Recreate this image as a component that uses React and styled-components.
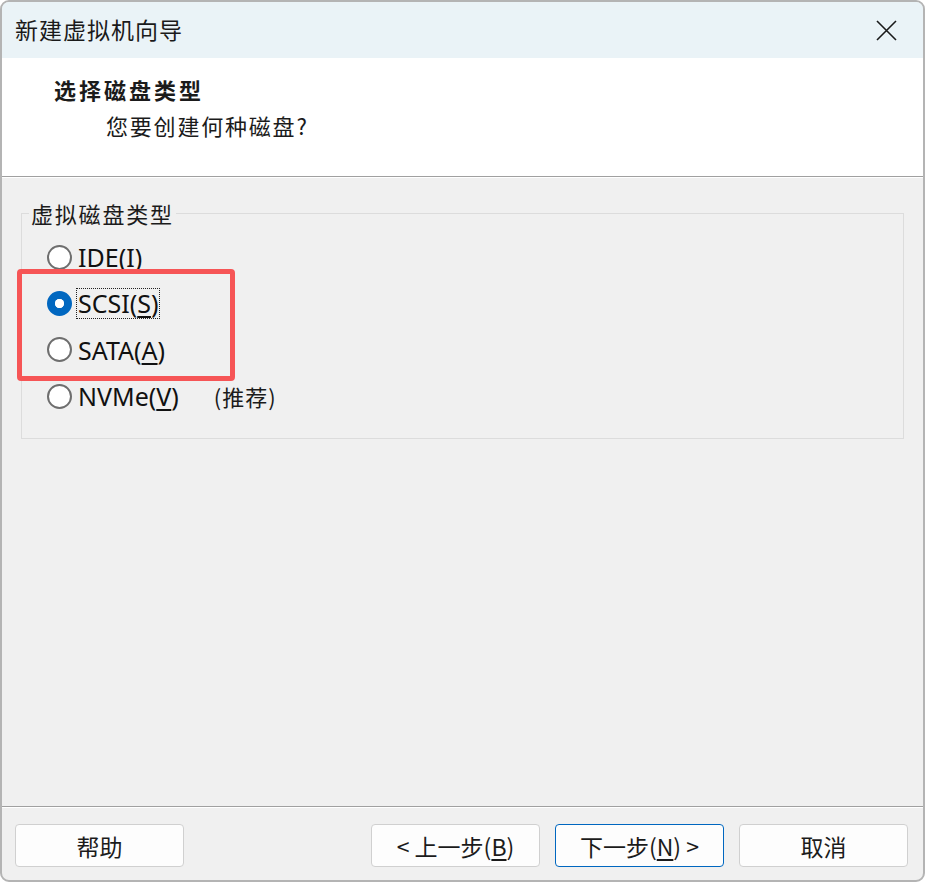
import React, { useState } from "react";
import styled, { createGlobalStyle } from "styled-components";

const GlobalStyle = createGlobalStyle`
  html, body {
    margin: 0;
    padding: 0;
    background: #ffffff;
  }
  body {
    font-family: "Noto Sans", "Noto Sans CJK SC", sans-serif;
    color: #1b1b1b;
  }
`;

const cjk = `"Noto Sans CJK SC", "Noto Sans", sans-serif`;
const latin = `"Noto Sans", "Noto Sans CJK SC", sans-serif`;

const Window = styled.div`
  box-sizing: border-box;
  width: 925px;
  height: 882px;
  border: 2px solid #b4b4b4;
  border-radius: 9px;
  overflow: hidden;
  display: flex;
  flex-direction: column;
  background: #f0f0f0;
`;

const TitleBar = styled.div`
  height: 56px;
  flex: none;
  display: flex;
  align-items: center;
  justify-content: space-between;
  padding: 0 0 0 13px;
  background: #eaf3f7;
  font-family: ${cjk};
  font-size: 23px;
  letter-spacing: 1px;
  color: #1a1a1a;
`;

const TitleText = styled.span`
  margin-top: -2px;
`;

const CloseButton = styled.button`
  width: 66px;
  height: 56px;
  border: 0;
  background: transparent;
  display: flex;
  align-items: center;
  justify-content: center;
  padding: 0 8px 0 0;
  color: #1a1a1a;
`;

const Header = styled.div`
  height: 119px;
  flex: none;
  box-sizing: border-box;
  background: #ffffff;
  border-bottom: 1px solid #a0a0a0;
  box-shadow: 0 1px 0 #ffffff;
  padding: 15px 0 0 52px;
  font-family: ${cjk};
`;

const StepTitle = styled.div`
  font-size: 22px;
  font-weight: 700;
  line-height: 32px;
  letter-spacing: 3px;
`;

const StepSub = styled.div`
  font-size: 22px;
  line-height: 32px;
  padding-left: 52px;
  margin-top: 4px;
  letter-spacing: 1.8px;
`;

const Body = styled.div`
  flex: 1;
  padding: 23px 19px 0 19px;
`;

const Group = styled.fieldset`
  margin: 0;
  padding: 8px 0 19px 0;
  border: 1px solid #dcdcdc;
  min-inline-size: 0;
`;

const Legend = styled.legend`
  margin-left: 7px;
  padding: 0 2px;
  font-family: ${cjk};
  font-size: 22px;
  line-height: 26px;
  letter-spacing: 1.8px;
  color: #1b1b1b;
`;

const RadioList = styled.div`
  position: relative;
  display: grid;
  grid-auto-rows: 46.3px;
  padding-left: 25px;
`;

const Row = styled.label`
  display: flex;
  align-items: center;
  cursor: default;
`;

const Circle = styled.span`
  box-sizing: border-box;
  width: 25px;
  height: 25px;
  border-radius: 50%;
  flex: none;
  display: flex;
  align-items: center;
  justify-content: center;
  border: ${(p) => (p.$checked ? "8px solid #0067c0" : "2px solid #6e6e6e")};
  background: #ffffff;
`;

const Label = styled.span`
  margin-left: 5px;
  padding: 0 1px;
  height: 29px;
  display: flex;
  align-items: center;
  font-family: ${latin};
  font-size: 25px;
  color: #111;
  outline: ${(p) => (p.$focused ? "1px dotted #222" : "none")};
  outline-offset: 0;

  u {
    text-underline-offset: 3px;
    text-decoration-thickness: 1.5px;
  }
`;

const Recommend = styled.span`
  margin-left: 34px;
  font-family: ${cjk};
  font-size: 22px;
  letter-spacing: 1px;
  color: #1b1b1b;
`;

const Highlight = styled.div`
  position: absolute;
  left: -5px;
  top: 35px;
  width: 218px;
  height: 112px;
  box-sizing: border-box;
  border: 5px solid #f65556;
  border-radius: 4px;
  pointer-events: none;
`;

const Footer = styled.div`
  flex: none;
  height: 74px;
  box-sizing: border-box;
  border-top: 1px solid #a0a0a0;
  box-shadow: inset 0 1px 0 #ffffff;
  display: flex;
  align-items: flex-start;
  gap: 15px;
  padding: 17px 15px 0 13px;
`;

const Spacer = styled.div`
  flex: 1;
`;

const Button = styled.button`
  box-sizing: border-box;
  width: 169px;
  height: 43px;
  border-radius: 4px;
  border: 1px solid ${(p) => (p.$primary ? "#0067c0" : "#d0d0d0")};
  background: #fdfdfd;
  font-family: ${cjk};
  font-size: 23px;
  color: #1b1b1b;
  display: flex;
  align-items: center;
  justify-content: center;
  padding: 0;

  u {
    text-underline-offset: 3px;
  }
`;

const Dot = styled.span`
  width: 9px;
  height: 9px;
  border-radius: 50%;
  background: #ffffff;
`;

const options = [
  { id: "ide", text: "IDE(", key: "I" },
  { id: "scsi", text: "SCSI(", key: "S" },
  { id: "sata", text: "SATA(", key: "A" },
  { id: "nvme", text: "NVMe(", key: "V", note: "(推荐)" },
];

export default function App() {
  const [value, setValue] = useState("scsi");

  return (
    <>
      <GlobalStyle />
      <Window>
        <TitleBar>
          <TitleText>新建虚拟机向导</TitleText>
          <CloseButton aria-label="关闭">
            <svg width="21" height="21" viewBox="0 0 21 21">
              <path d="M1 1 L20 20 M20 1 L1 20" stroke="#1a1a1a" strokeWidth="1.6" fill="none" />
            </svg>
          </CloseButton>
        </TitleBar>
        <Header>
          <StepTitle>选择磁盘类型</StepTitle>
          <StepSub>您要创建何种磁盘?</StepSub>
        </Header>
        <Body>
          <Group>
            <Legend>虚拟磁盘类型</Legend>
            <RadioList>
              {options.map((o) => (
                <Row key={o.id} onClick={() => setValue(o.id)}>
                  <Circle $checked={value === o.id}>
                    {value === o.id && <Dot />}
                  </Circle>
                  <Label $focused={value === o.id}>
                    {o.text}
                    <u>{o.key}</u>)
                  </Label>
                  {o.note && <Recommend>{o.note}</Recommend>}
                </Row>
              ))}
              <Highlight />
            </RadioList>
          </Group>
        </Body>
        <Footer>
          <Button>帮助</Button>
          <Spacer />
          <Button>
            &lt; 上一步(<u>B</u>)
          </Button>
          <Button $primary>
            下一步(<u>N</u>) &gt;
          </Button>
          <Button>取消</Button>
        </Footer>
      </Window>
    </>
  );
}
